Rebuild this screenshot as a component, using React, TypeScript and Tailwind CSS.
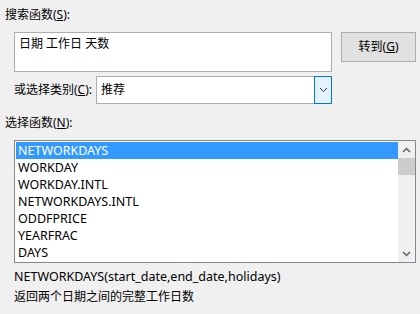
import React from "react";

const items = [
  "NETWORKDAYS",
  "WORKDAY",
  "WORKDAY.INTL",
  "NETWORKDAYS.INTL",
  "ODDFPRICE",
  "YEARFRAC",
  "DAYS",
];

export default function App() {
  return (
    <div
      className="w-[420px] h-[314px] bg-[#f0f0f0] overflow-hidden text-[12px] text-black"
      style={{ fontFamily: '"Noto Sans", "Noto Sans CJK SC", sans-serif' }}
    >
      <div className="pl-[5px] pt-[7px] h-[23px] leading-[16px]">
        搜索函数(<span className="underline">S</span>):
      </div>
      <div className="flex mt-[9px] ml-[14px]">
        <div className="w-[318px] h-[40px] border border-[#abadb3] bg-white px-[4px] pt-[3px] leading-[16px]">
          日期 工作日 天数
        </div>
        <div className="ml-[9px] w-[75px] h-[30px] border border-[#adadad] bg-[#e1e1e1] flex items-center justify-center leading-[16px]">
          转到(<span className="underline">G</span>)
        </div>
      </div>
      <div className="flex items-center mt-[4px] ml-[14px] h-[28px]">
        <span className="w-[82px] leading-[16px]">
          或选择类别(<span className="underline">C</span>):
        </span>
        <div className="relative w-[236px] h-[28px] border border-[#abadb3] bg-white pl-[4px] flex items-center leading-[16px]">
          推荐
          <div className="absolute right-[-1px] top-[-1px] bottom-[-1px] w-[18px] border border-[#0078d7] bg-[#e5f1fb] flex items-center justify-center">
            <svg width="9" height="6" viewBox="0 0 9 6">
              <path d="M1 1 L4.5 4.5 L8 1" fill="none" stroke="#333" strokeWidth="1" />
            </svg>
          </div>
        </div>
      </div>
      <div className="pl-[5px] mt-[11px] h-[16px] leading-[16px]">
        选择函数(<span className="underline">N</span>):
      </div>
      <div className="ml-[14px] mt-[9px] w-[402px] h-[123px] border border-[#828790] bg-white flex">
        <div className="flex-1 pt-[1px] pl-[1px] text-[12.5px]">
          {items.map((it, i) => (
            <div
              key={it}
              className={
                "h-[17px] leading-[17px] pl-[2px] " +
                (i === 0 ? "bg-[#3399ff] text-white" : "")
              }
            >
              {it}
            </div>
          ))}
        </div>
        <div className="w-[17px] bg-[#f0f0f0] flex flex-col">
          <div className="h-[17px] flex items-center justify-center">
            <svg width="9" height="6" viewBox="0 0 9 6">
              <path d="M1 5 L4.5 1.5 L8 5" fill="none" stroke="#606060" strokeWidth="1.5" />
            </svg>
          </div>
          <div className="h-[17px] bg-[#cdcdcd]" />
          <div className="flex-1" />
          <div className="h-[17px] flex items-center justify-center">
            <svg width="9" height="6" viewBox="0 0 9 6">
              <path d="M1 1 L4.5 4.5 L8 1" fill="none" stroke="#606060" strokeWidth="1.5" />
            </svg>
          </div>
        </div>
      </div>
      <div className="ml-[14px] mt-[6px] h-[16px] leading-[16px] text-[12.5px]">
        NETWORKDAYS(start_date,end_date,holidays)
      </div>
      <div className="ml-[14px] mt-[4px] h-[16px] leading-[16px]">
        返回两个日期之间的完整工作日数
      </div>
    </div>
  );
}
